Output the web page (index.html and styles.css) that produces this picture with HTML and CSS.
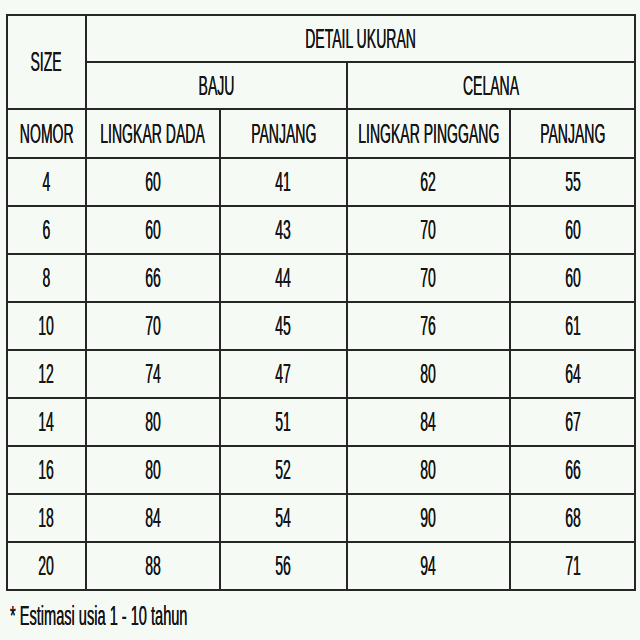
FILE: index.html
```html
<!DOCTYPE html>
<html>
<head>
<meta charset="utf-8">
<link rel="stylesheet" href="styles.css">
</head>
<body>
<div class="page">
  <table class="sizes">
    <colgroup>
      <col class="c1"><col class="c2"><col class="c3"><col class="c4"><col class="c5">
    </colgroup>
    <tr class="h1">
      <td rowspan="2"><div class="w"><span class="t">SIZE</span></div></td>
      <td colspan="4"><div class="w"><span class="t">DETAIL UKURAN</span></div></td>
    </tr>
    <tr class="h2">
      <td colspan="2"><div class="w"><span class="t">BAJU</span></div></td>
      <td colspan="2"><div class="w"><span class="t">CELANA</span></div></td>
    </tr>
    <tr class="h3">
      <td><div class="w"><span class="t">NOMOR</span></div></td>
      <td><div class="w"><span class="t">LINGKAR DADA</span></div></td>
      <td><div class="w"><span class="t">PANJANG</span></div></td>
      <td><div class="w"><span class="t">LINGKAR PINGGANG</span></div></td>
      <td><div class="w"><span class="t">PANJANG</span></div></td>
    </tr>
    <tr><td><span class="t">4</span></td><td><span class="t">60</span></td><td><span class="t">41</span></td><td><span class="t">62</span></td><td><span class="t">55</span></td></tr>
    <tr><td><span class="t">6</span></td><td><span class="t">60</span></td><td><span class="t">43</span></td><td><span class="t">70</span></td><td><span class="t">60</span></td></tr>
    <tr><td><span class="t">8</span></td><td><span class="t">66</span></td><td><span class="t">44</span></td><td><span class="t">70</span></td><td><span class="t">60</span></td></tr>
    <tr><td><span class="t">10</span></td><td><span class="t">70</span></td><td><span class="t">45</span></td><td><span class="t">76</span></td><td><span class="t">61</span></td></tr>
    <tr><td><span class="t">12</span></td><td><span class="t">74</span></td><td><span class="t">47</span></td><td><span class="t">80</span></td><td><span class="t">64</span></td></tr>
    <tr><td><span class="t">14</span></td><td><span class="t">80</span></td><td><span class="t">51</span></td><td><span class="t">84</span></td><td><span class="t">67</span></td></tr>
    <tr><td><span class="t">16</span></td><td><span class="t">80</span></td><td><span class="t">52</span></td><td><span class="t">80</span></td><td><span class="t">66</span></td></tr>
    <tr><td><span class="t">18</span></td><td><span class="t">84</span></td><td><span class="t">54</span></td><td><span class="t">90</span></td><td><span class="t">68</span></td></tr>
    <tr><td><span class="t">20</span></td><td><span class="t">88</span></td><td><span class="t">56</span></td><td><span class="t">94</span></td><td><span class="t">71</span></td></tr>
  </table>
  <p class="note"><span class="nt">* Estimasi usia 1 - 10 tahun</span></p>
</div>
</body>
</html>
```
FILE: styles.css
```css
html, body {
  margin: 0;
  padding: 0;
  background: #f6faf5;
}
.page {
  width: 640px;
  height: 640px;
  padding: 14px 0 0 6px;
  box-sizing: border-box;
  font-family: "Liberation Sans", Arial, sans-serif;
  color: #161616;
  overflow: hidden;
}
.sizes {
  border-collapse: collapse;
  table-layout: fixed;
  width: 628px;
}
.c1 { width: 79px; }
.c2 { width: 134px; }
.c3 { width: 127px; }
.c4 { width: 163px; }
.c5 { width: 125px; }
.sizes td {
  border: 2px solid #262626;
  height: 46px;
  padding: 0;
  text-align: center;
  vertical-align: middle;
  font-size: 27px;
  line-height: 30px;
  white-space: nowrap;
  overflow: visible;
}
.sizes .h1 td { height: 45px; }
.sizes .h2 td { height: 45px; }
.sizes .h3 td { height: 47px; }
.w {
  display: flex;
  justify-content: center;
  width: 100%;
}
.t {
  display: inline-block;
  flex: none;
  transform: scaleX(0.52);
  transform-origin: center;
  text-shadow: 0 0 0.6px #161616;
}
.note {
  margin: 10px 0 0 4px;
  font-size: 27px;
  line-height: 30px;
  white-space: nowrap;
}
.nt {
  display: inline-block;
  transform: scaleX(0.54);
  transform-origin: left center;
  text-shadow: 0 0 0.6px #161616;
}
```
